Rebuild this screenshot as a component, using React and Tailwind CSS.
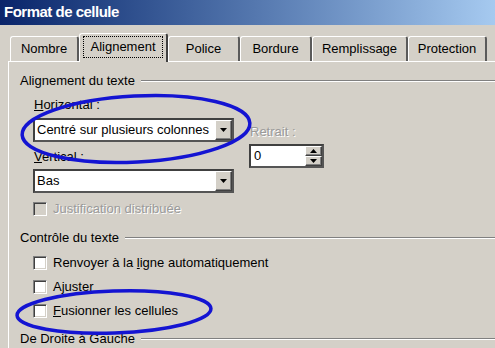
const FONT = "font-['Liberation_Sans',Arial,sans-serif]";

const TABS = [
  { label: "Nombre", width: "w-[69px]" },
  { label: "Alignement", width: "w-[89px]", active: true },
  { label: "Police", width: "w-[72px]" },
  { label: "Bordure", width: "w-[72px]" },
  { label: "Remplissage", width: "w-[96px]" },
  { label: "Protection", width: "w-[79px]" },
];

function Arrow({ up }) {
  return (
    <svg width="7" height="4" viewBox="0 0 7 4" className="block">
      <polygon points={up ? "3.5,0 7,4 0,4" : "0,0 7,0 3.5,4"} fill="#000" />
    </svg>
  );
}

function RaisedButton({ className, children }) {
  return (
    <div
      className={`flex items-center justify-center bg-[#d4d0c8] border border-t-white border-l-white border-b-[#404040] border-r-[#404040] shadow-[inset_-1px_-1px_0_#808080] ${className}`}
    >
      {children}
    </div>
  );
}

function Combo({ value }) {
  return (
    <div className="flex h-[24px] w-[201px] border-2 border-t-[#404040] border-l-[#404040] border-b-[#555] border-r-[#555] bg-white">
      <div className="flex flex-1 items-center pl-[2px] text-[13px] text-black">{value}</div>
      <RaisedButton className="h-full w-[17px]">
        <Arrow />
      </RaisedButton>
    </div>
  );
}

function Checkbox({ label, disabled }) {
  return (
    <div className="flex h-[16px] items-center">
      <div
        className={`h-[14px] w-[14px] border border-t-[#808080] border-l-[#808080] border-b-white border-r-white shadow-[inset_1px_1px_0_#404040,inset_-1px_-1px_0_#d4d0c8] ${
          disabled ? "bg-[#d4d0c8]" : "bg-white"
        }`}
      />
      <span
        className={`ml-[6px] text-[13px] ${
          disabled ? "text-[#9a9a9a] [text-shadow:1px_1px_0_#fff]" : "text-black"
        }`}
      >
        {label}
      </span>
    </div>
  );
}

function GroupTitle({ title, className }) {
  return (
    <div className={`flex h-[16px] items-center ${className}`}>
      <span className="text-[13px] text-black">{title}</span>
      <div className="ml-[6px] h-[2px] flex-1 border-t border-t-[#808080] border-b border-b-white" />
    </div>
  );
}

export default function App() {
  return (
    <div className={`relative h-[348px] w-[495px] overflow-hidden bg-[#d4d0c8] ${FONT}`}>
      <div className="flex h-[25px] items-center bg-gradient-to-r from-[#0a246a] to-[#a6caf0] pl-[4px]">
        <span className="text-[15px] font-bold tracking-[-0.5px] text-white">Format de cellule</span>
      </div>

      <div className="mt-[8px] flex h-[28px] items-end pl-[10px]">
        {TABS.map((tab) =>
          tab.active ? (
            <div
              key={tab.label}
              className={`relative z-10 -mb-px h-[29px] ${tab.width} rounded-t-[3px] border-t border-l border-r-2 border-t-white border-l-white border-r-[#404040] bg-[#d4d0c8] px-[3px] pt-[2px] pb-[4px]`}
            >
              <div className="flex h-full items-center justify-center border border-dotted border-black text-[13px] text-black">
                {tab.label}
              </div>
            </div>
          ) : (
            <div
              key={tab.label}
              className={`flex h-[25px] ${tab.width} items-center justify-center rounded-t-[3px] border-t border-l border-r-2 border-t-white border-l-white border-r-[#5a5a5a] text-[13px] text-black`}
            >
              {tab.label}
            </div>
          )
        )}
      </div>

      <div className="ml-[8px] h-[300px] border-t border-l border-white pl-[11px]">
        <GroupTitle title="Alignement du texte" className="mt-[11px]" />

        <div className="pl-[13px]">
          <div className="flex">
            <div className="w-[201px]">
              <div className="mt-[8px] flex h-[16px] items-center pl-px text-[13px] text-black">
                <span>
                  <span className="underline">H</span>orizontal :
                </span>
              </div>
              <div className="mt-[5px]">
                <Combo value="Centré sur plusieurs colonnes" />
              </div>
              <div className="mt-[7px] flex h-[16px] items-center pl-px text-[13px] text-black">
                <span>
                  <span className="underline">V</span>ertical :
                </span>
              </div>
              <div className="mt-[4px]">
                <Combo value="Bas" />
              </div>
            </div>

            <div className="ml-[15px] pt-[35px]">
              <div className="flex h-[16px] items-center pl-px text-[13px] text-[#9a9a9a] [text-shadow:1px_1px_0_#fff]">
                Retrait :
              </div>
              <div className="mt-[4px] flex h-[24px] w-[75px] border-2 border-t-[#404040] border-l-[#404040] border-b-[#555] border-r-[#555] bg-white">
                <div className="flex flex-1 items-center pl-[3px] text-[13px] text-black">0</div>
                <div className="flex w-[17px] flex-col">
                  <RaisedButton className="h-1/2 w-full">
                    <Arrow up />
                  </RaisedButton>
                  <RaisedButton className="h-1/2 w-full">
                    <Arrow />
                  </RaisedButton>
                </div>
              </div>
            </div>
          </div>

          <div className="mt-[8px]">
            <Checkbox label="Justification distribuée" disabled />
          </div>
        </div>

        <GroupTitle title="Contrôle du texte" className="mt-[13px]" />

        <div className="pl-[13px]">
          <div className="mt-[9px]">
            <Checkbox
              label={
                <>
                  Renvoyer à la <span className="underline">l</span>igne automatiquement
                </>
              }
            />
          </div>
          <div className="mt-[8px]">
            <Checkbox
              label={
                <>
                  A<span className="underline">j</span>uster
                </>
              }
            />
          </div>
          <div className="mt-[8px]">
            <Checkbox
              label={
                <>
                  <span className="underline">F</span>usionner les cellules
                </>
              }
            />
          </div>
        </div>

        <GroupTitle title="De Droite à Gauche" className="mt-[12px]" />
      </div>

      <svg
        className="pointer-events-none absolute inset-0"
        width="495"
        height="348"
        viewBox="0 0 495 348"
      >
        <ellipse
          cx="136"
          cy="129"
          rx="114"
          ry="33"
          transform="rotate(-3 136 129)"
          fill="none"
          stroke="#1414d2"
          strokeWidth="3.5"
        />
        <ellipse
          cx="114"
          cy="312"
          rx="97"
          ry="21"
          transform="rotate(-2 114 312)"
          fill="none"
          stroke="#1414d2"
          strokeWidth="3.5"
        />
      </svg>
    </div>
  );
}
